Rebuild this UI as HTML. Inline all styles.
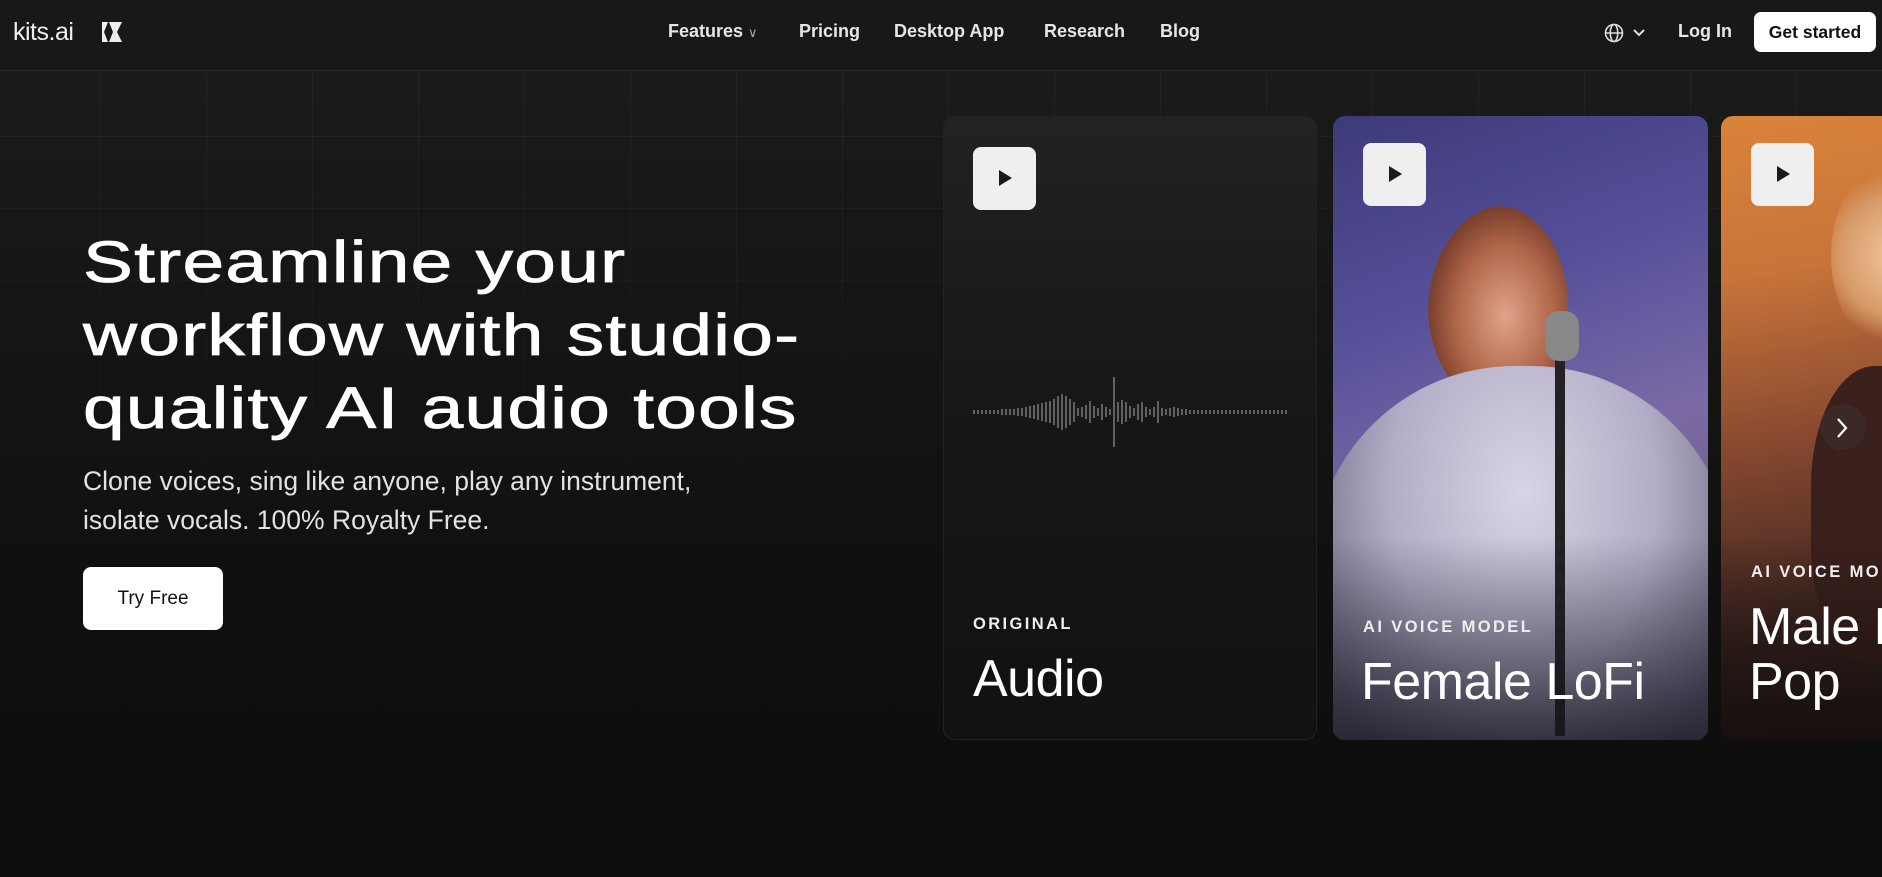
<!DOCTYPE html>
<html><head><meta charset="utf-8">
<style>
*{margin:0;padding:0;box-sizing:border-box}
html,body{width:1882px;height:877px;overflow:hidden;background:#0f0f0f;font-family:"Liberation Sans",sans-serif;color:#fff}
.bg{position:absolute;left:0;top:0;width:1882px;height:877px;background:linear-gradient(180deg,#1c1d1b 0%,#151614 35%,#0f0f0f 70%,#0e0e0e 100%)}
.grid{position:absolute;left:0;top:71px;width:1882px;height:700px;
background-image:linear-gradient(90deg,rgba(255,255,255,.045) 1px,transparent 1px),linear-gradient(0deg,rgba(255,255,255,.04) 1px,transparent 1px);
background-size:106px 72px;background-position:100px 0,0 66px;
-webkit-mask-image:linear-gradient(180deg,#000 0%,rgba(0,0,0,.5) 40%,transparent 75%)}
.nav{position:absolute;left:0;top:0;width:1882px;height:71px;background:#181917;border-bottom:1px solid #262724}
.logo{position:absolute;left:13px;top:18px;font-size:25px;letter-spacing:-.5px;color:#eee}
.navl{position:absolute;top:21px;font-size:18px;font-weight:bold;color:#e6e6e6}
.btn{position:absolute;background:#fff;color:#111;border-radius:7px;display:flex;align-items:center;justify-content:center}
h1{position:absolute;left:83px;top:226px;font-size:58px;font-weight:normal;line-height:73px;letter-spacing:1px;transform:scaleX(1.29);transform-origin:left top;white-space:nowrap;-webkit-text-stroke:.8px #fff}
.p{position:absolute;left:83px;top:462px;font-size:26.5px;line-height:39px;color:#e2e2e2}
.card{position:absolute;top:116px;height:624px;border-radius:12px;overflow:hidden}
.play{position:absolute;width:63px;height:63px;background:#efefef;border-radius:8px}
.play:after{content:"";position:absolute;left:26px;top:23px;border-left:13px solid #1a1a1a;border-top:8px solid transparent;border-bottom:8px solid transparent}
.lab{position:absolute;font-size:16.5px;font-weight:bold;letter-spacing:2.4px;color:#eee}
.tit{position:absolute;font-size:52px;line-height:55px;letter-spacing:-.5px;color:#fff}
</style></head><body>
<div class="bg"></div>
<div class="grid"></div>
<div class="nav">
 <div class="logo">kits.ai</div>
 <svg style="position:absolute;left:101px;top:21px" width="22" height="22" viewBox="0 0 22 22"><path d="M1 1h6l-4 10 4 10H1z M8 1h13l-5 10 5 10H8l4-10z" fill="#eee"/></svg>
 <div class="navl" style="left:668px">Features <span style="font-weight:normal;font-size:13px;color:#aaa">&#8744;</span></div>
 <div class="navl" style="left:799px">Pricing</div>
 <div class="navl" style="left:894px">Desktop App</div>
 <div class="navl" style="left:1044px">Research</div>
 <div class="navl" style="left:1160px">Blog</div>
 <svg style="position:absolute;left:1604px;top:23px" width="20" height="20" viewBox="0 0 20 20" fill="none" stroke="#ddd" stroke-width="1.6"><circle cx="10" cy="10" r="8.5"/><ellipse cx="10" cy="10" rx="3.8" ry="8.5"/><path d="M1.5 10h17"/></svg>
 <svg style="position:absolute;left:1633px;top:28px" width="12" height="9" viewBox="0 0 12 9" fill="none" stroke="#ddd" stroke-width="2"><path d="M1 2l5 5 5-5"/></svg>
 <div class="navl" style="left:1678px">Log In</div>
 <div class="btn" style="left:1754px;top:12px;width:122px;height:40px;font-size:17.5px;font-weight:bold">Get started</div>
</div>

<h1>Streamline your<br>workflow with studio-<br>quality AI audio tools</h1>
<div class="p">Clone voices, sing like anyone, play any instrument,<br>isolate vocals. 100% Royalty Free.</div>
<div class="btn" style="left:83px;top:567px;width:140px;height:63px;font-size:19px;border-radius:8px">Try Free</div>

<div class="card" style="left:943px;width:374px;background:linear-gradient(180deg,#222321 0%,#171716 45%,#111 100%);border:1px solid #222">
 <div class="play" style="left:29px;top:30px"></div>
 <svg style="position:absolute;left:29px;top:255px" width="316" height="80" viewBox="0 0 316 80" stroke="#aaa" stroke-width="1">
  <path d="M1 38v4M5 38v4M9 38v4M13 38v4M17 38v4M21 38v4M25 38v4M29 37v6M33 37v6M37 37v6M41 37v6M45 36v8M49 36v8M53 35v10M57 34v12M61 33v14M65 32v16M69 31v18M73 30v20M77 29v22M81 27v26M85 24v32M89 22v36M93 24v32M97 27v26M101 30v20M105 36v8M109 35v10M113 33v14M117 29v22M121 34v12M125 36v8M129 32v16M133 35v10M137 37v6M141 5v70M145 30v20M149 28v24M153 30v20M157 34v12M161 36v8M165 32v16M169 30v20M173 35v10M177 37v6M181 35v10M185 29v22M189 36v8M193 37v6M197 36v8M201 35v10M205 36v8M209 37v6M213 37v6M217 38v4M221 38v4M225 38v4M229 38v4M233 38v4M237 38v4M241 38v4M245 38v4M249 38v4M253 38v4M257 38v4M261 38v4M265 38v4M269 38v4M273 38v4M277 38v4M281 38v4M285 38v4M289 38v4M293 38v4M297 38v4M301 38v4M305 38v4M309 38v4M313 38v4"/>
 </svg>
 <div class="lab" style="left:29px;top:498px">ORIGINAL</div>
 <div class="tit" style="left:29px;top:535px">Audio</div>
</div>

<div class="card" style="left:1333px;width:375px;background:linear-gradient(160deg,#3d3a78 0%,#56509a 30%,#7b6aa6 55%,#6a5e80 75%,#2a2630 100%)">
 <div style="position:absolute;left:95px;top:90px;width:140px;height:200px;border-radius:50%;background:radial-gradient(ellipse at 55% 55%,#e0a38a 0%,#b0664a 45%,#7a3f2c 70%,transparent 72%)"></div>
 <div style="position:absolute;left:-20px;top:250px;width:420px;height:420px;border-radius:48% 48% 0 0;background:radial-gradient(ellipse at 50% 30%,#d8d4e4 0%,#b3adc8 45%,#6e6780 80%)"></div>
 <div style="position:absolute;left:222px;top:200px;width:10px;height:420px;background:#222"></div>
 <div style="position:absolute;left:212px;top:195px;width:34px;height:50px;border-radius:14px;background:#888"></div>
 <div style="position:absolute;left:0;top:420px;width:375px;height:204px;background:linear-gradient(180deg,transparent,rgba(20,18,28,.75))"></div>
 <div class="play" style="left:30px;top:27px"></div>
 <div class="lab" style="left:30px;top:502px">AI VOICE MODEL</div>
 <div class="tit" style="left:28px;top:539px">Female LoFi</div>
</div>

<div class="card" style="left:1721px;width:200px;background:linear-gradient(170deg,#d9833a 0%,#c8743a 25%,#8a4a30 50%,#3a2320 80%,#1e1614 100%)">
 <div style="position:absolute;left:110px;top:40px;width:140px;height:200px;border-radius:50%;background:radial-gradient(circle,#f3c9a0 0%,#d79a68 50%,transparent 70%)"></div>
 <div style="position:absolute;left:90px;top:250px;width:160px;height:300px;border-radius:40%;background:#3a201c"></div>
 <div style="position:absolute;left:0;top:420px;width:200px;height:204px;background:linear-gradient(180deg,transparent,rgba(20,14,12,.8))"></div>
 <div class="play" style="left:30px;top:27px"></div>
 <div class="lab" style="left:30px;top:447px;white-space:nowrap">AI VOICE MODEL</div>
 <div class="tit" style="left:28px;top:484px;white-space:nowrap">Male Brit<br>Pop</div>
</div>
<div style="position:absolute;left:1820px;top:404px;width:46px;height:46px;border-radius:50%;background:rgba(60,50,50,.55)"></div>
<svg style="position:absolute;left:1835px;top:417px" width="14" height="22" viewBox="0 0 14 22" fill="none" stroke="#fff" stroke-width="2.2"><path d="M3 2l8 9-8 9"/></svg>
</body></html>
